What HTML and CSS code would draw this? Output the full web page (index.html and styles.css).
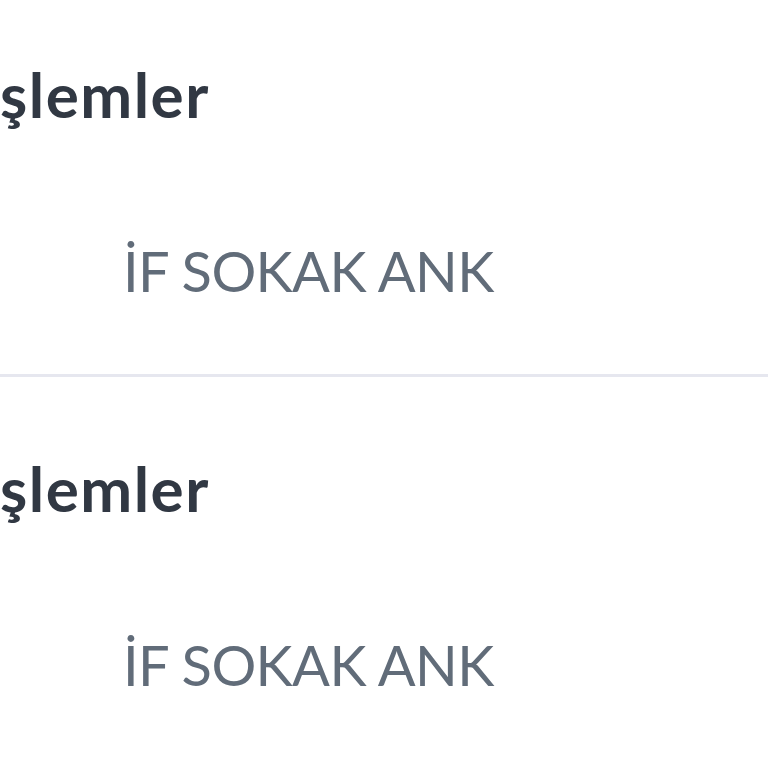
FILE: index.html
```html
<!DOCTYPE html>
<html>
<head>
  <meta name="viewport" content="width=device-width, initial-scale=1.0">
  <link rel="stylesheet" href="styles.css">
</head>
<body>
  <div id="list">
    <div class="item">
      <div class="item-title">şlemler</div>
      <div class="item-sub">İF SOKAK ANK</div>
    </div>
    <div class="item">
      <div class="item-title">şlemler</div>
      <div class="item-sub">İF SOKAK ANK</div>
    </div>
  </div>
</body>
</html>
```

FILE: styles.css
```css
html, body {
  margin: 0;
  padding: 0;
  background-color: #fff;
  overflow: hidden;
}

#list {
  margin-top: -17px;
  font-family: Lato, "Noto Sans", sans-serif;
}

.item {
  height: 394px;
  padding-top: 76px;
  box-sizing: border-box;
  border-bottom: 3px solid #e6e7ef;
}

.item-title {
  font-size: 62px;
  font-weight: bold;
  letter-spacing: 1.5px;
  color: #313843;
  line-height: 70px;
}

.item-sub {
  margin-top: 107px;
  padding-left: 123px;
  font-size: 56px;
  letter-spacing: -0.6px;
  color: #616c79;
  line-height: 70px;
}
```
